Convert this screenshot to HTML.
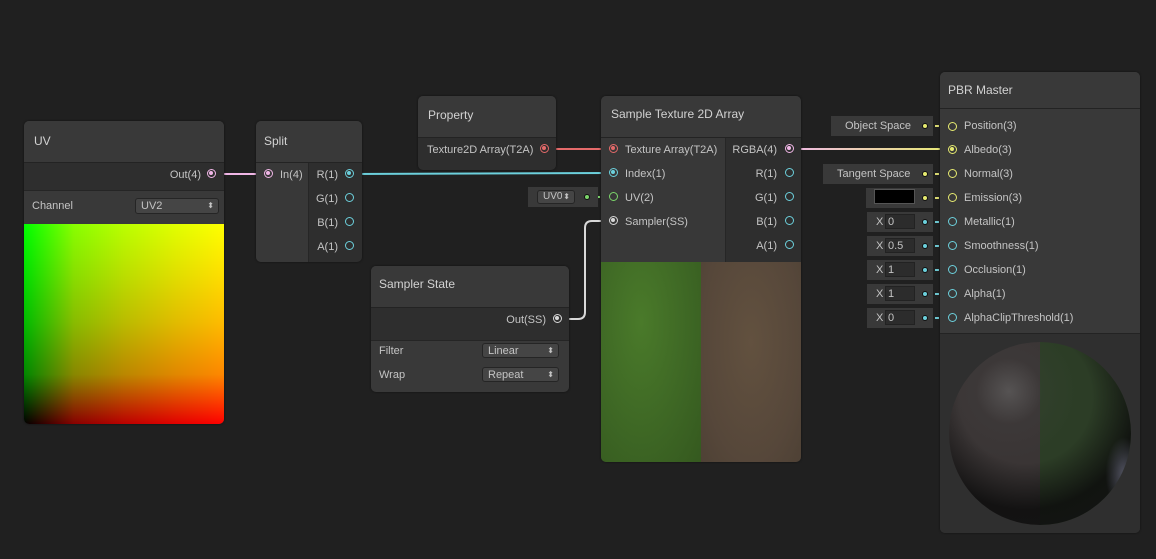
<!DOCTYPE html>
<html><head><meta charset="utf-8"><style>
*{box-sizing:border-box;margin:0;padding:0}
body{width:1156px;height:559px;background:#202020;position:relative;overflow:hidden;font-family:"Liberation Sans","DejaVu Sans",sans-serif;font-size:11px;color:#c4c4c4}
.n{position:absolute;background:#2e2e2e;border-radius:5px;overflow:hidden;box-shadow:0 0 2px #111}
.h{position:absolute;left:0;right:0;top:0;background:#393939;border-bottom:1px solid #232323;font-size:12px;color:#d2d2d2;padding-left:10px}
.a{position:absolute}
.t{position:absolute;white-space:nowrap;font-size:11px;color:#c4c4c4;margin-top:2px}
.p{position:absolute;width:9px;height:9px;border-radius:50%;border:1.5px solid}
.f{position:absolute;width:9px;height:9px;border-radius:50%;border:1.5px solid}
.f::after{content:"";position:absolute;left:1px;top:1px;width:4px;height:4px;border-radius:50%;background:currentColor}
.dd{position:absolute;background:#454545;border:1px solid #252525;border-radius:3px;color:#c4c4c4;font-size:11px;padding-left:5px;line-height:14px}
.dd::after{content:"⬍";position:absolute;right:4px;top:0;font-size:8px}
.lb{position:absolute;background:#393939;height:20px}
.dot{position:absolute;width:6px;height:6px;border-radius:50%;border:1px solid #111}
.in{position:absolute;left:885px;width:30px;height:15px;background:#2c2c2c;border:1px solid #222;padding-left:2px;color:#c4c4c4;line-height:14px;font-size:11px}
</style></head><body>

<svg class="a" style="left:0;top:0" width="1156" height="559">
<defs><linearGradient id="g1" x1="789" x2="952" y1="0" y2="0" gradientUnits="userSpaceOnUse"><stop offset="0" stop-color="#f0b8e8"/><stop offset="1" stop-color="#e6ea70"/></linearGradient></defs>
<line x1="216" y1="174" x2="264" y2="174" stroke="#f0b6e6" stroke-width="2"/>
<line x1="354" y1="174" x2="609" y2="173" stroke="#6cd0dc" stroke-width="2"/>
<line x1="548" y1="149" x2="609" y2="149" stroke="#e56a6a" stroke-width="2"/>
<path d="M561 319 H578 Q585 319 585 312 V228 Q585 221 592 221 H609" fill="none" stroke="#d8d8d8" stroke-width="2"/>
<line x1="793" y1="149" x2="948" y2="149" stroke="url(#g1)" stroke-width="2"/>
<line x1="590" y1="197" x2="609" y2="197" stroke="#7bd56a" stroke-width="2" stroke-dasharray="4 2"/>
<g stroke-width="2" stroke-dasharray="4 2">
<line x1="929" y1="126" x2="948" y2="126" stroke="#d8d870"/>
<line x1="929" y1="174" x2="948" y2="174" stroke="#d8d870"/>
<line x1="929" y1="198" x2="948" y2="198" stroke="#d8d870"/>
<line x1="929" y1="222" x2="948" y2="222" stroke="#6cc6cf"/>
<line x1="929" y1="246" x2="948" y2="246" stroke="#6cc6cf"/>
<line x1="929" y1="270" x2="948" y2="270" stroke="#6cc6cf"/>
<line x1="929" y1="294" x2="948" y2="294" stroke="#6cc6cf"/>
<line x1="929" y1="318" x2="948" y2="318" stroke="#6cc6cf"/>
</g>
</svg>

<!-- UV -->
<div class="n" style="left:24px;top:121px;width:200px;height:303px;background:#393939">
 <div class="h" style="height:42px;line-height:40px">UV</div>
 <div class="a" style="left:0;right:0;top:42px;height:28px;background:#2e2e2e;border-bottom:1px solid #252525"></div>
 <div class="t" style="right:23px;top:46px">Out(4)</div>
 <div class="f" style="left:183px;top:48px;color:#f0b6e6"></div>
 <div class="t" style="left:8px;top:77px">Channel</div>
 <div class="dd" style="left:111px;top:77px;width:84px;height:16px">UV2</div>
 <div class="a" style="left:0;top:103px;width:200px;height:200px;background:linear-gradient(to right,#000,#880000 25%,#ba0000 50%,#df0000 75%,#f00)">
  <div class="a" style="left:0;top:0;width:200px;height:200px;background:linear-gradient(to top,#000,#008800 25%,#00ba00 50%,#00df00 75%,#0f0);mix-blend-mode:screen"></div>
 </div>
</div>

<!-- Split -->
<div class="n" style="left:256px;top:121px;width:106px;height:141px">
 <div class="h" style="height:42px;line-height:40px;padding-left:8px">Split</div>
 <div class="a" style="left:0;top:42px;width:53px;bottom:0;background:#383838;border-right:1px solid #262626"></div>
 <div class="f" style="left:8px;top:48px;color:#f0b6e6"></div>
 <div class="t" style="left:24px;top:46px">In(4)</div>
 <div class="t" style="right:24px;top:46px">R(1)</div>
 <div class="f" style="left:89px;top:48px;color:#6cd0dc"></div>
 <div class="t" style="right:24px;top:70px">G(1)</div><div class="p" style="left:89px;top:72px;color:#6cd0dc"></div>
 <div class="t" style="right:24px;top:94px">B(1)</div><div class="p" style="left:89px;top:96px;color:#6cd0dc"></div>
 <div class="t" style="right:24px;top:118px">A(1)</div><div class="p" style="left:89px;top:120px;color:#6cd0dc"></div>
</div>

<!-- Property -->
<div class="n" style="left:418px;top:96px;width:138px;height:74px">
 <div class="h" style="height:42px;line-height:38px">Property</div>
 <div class="t" style="left:9px;top:46px">Texture2D Array(T2A)</div>
 <div class="f" style="left:122px;top:48px;color:#e56a6a"></div>
</div>

<!-- Sample Texture 2D Array -->
<div class="n" style="left:601px;top:96px;width:200px;height:366px">
 <div class="h" style="height:42px;line-height:36px">Sample Texture 2D Array</div>
 <div class="a" style="left:0;top:42px;width:125px;height:124px;background:#383838;border-right:1px solid #262626"></div>
 <div class="f" style="left:8px;top:48px;color:#e56a6a"></div><div class="t" style="left:24px;top:46px">Texture Array(T2A)</div>
 <div class="f" style="left:8px;top:72px;color:#6cd0dc"></div><div class="t" style="left:24px;top:70px">Index(1)</div>
 <div class="p" style="left:8px;top:96px;color:#7bd56a"></div><div class="t" style="left:24px;top:94px">UV(2)</div>
 <div class="f" style="left:8px;top:120px;color:#d8d8d8"></div><div class="t" style="left:24px;top:118px">Sampler(SS)</div>
 <div class="t" style="right:24px;top:46px">RGBA(4)</div><div class="f" style="left:184px;top:48px;color:#f0b6e6"></div>
 <div class="t" style="right:24px;top:70px">R(1)</div><div class="p" style="left:184px;top:72px;color:#6cd0dc"></div>
 <div class="t" style="right:24px;top:94px">G(1)</div><div class="p" style="left:184px;top:96px;color:#6cd0dc"></div>
 <div class="t" style="right:24px;top:118px">B(1)</div><div class="p" style="left:184px;top:120px;color:#6cd0dc"></div>
 <div class="t" style="right:24px;top:142px">A(1)</div><div class="p" style="left:184px;top:144px;color:#6cd0dc"></div>
 <div class="a" style="left:0;top:166px;width:100px;height:200px;background:radial-gradient(ellipse at 40% 30%,#4a7a2a,#3d6624 60%,#35591f)"></div>
 <div class="a" style="left:100px;top:166px;width:100px;height:200px;background:radial-gradient(ellipse at 50% 40%,#62513f,#56473a 70%,#4e4135)"></div>
</div>
<!-- UV0 field -->
<div class="lb" style="left:528px;top:187px;width:70px"></div>
<div class="dd" style="left:537px;top:190px;width:38px;height:14px;font-size:10px;line-height:12px">UV0</div>
<div class="dot" style="left:584px;top:194px;background:#7bd56a"></div>

<!-- Sampler State -->
<div class="n" style="left:371px;top:266px;width:198px;height:126px;background:#393939">
 <div class="h" style="height:42px;line-height:36px;padding-left:8px">Sampler State</div>
 <div class="a" style="left:0;right:0;top:42px;height:33px;background:#2e2e2e;border-bottom:1px solid #252525"></div>
 <div class="t" style="right:23px;top:46px">Out(SS)</div>
 <div class="f" style="left:182px;top:48px;color:#d8d8d8"></div>
 <div class="t" style="left:8px;top:77px">Filter</div>
 <div class="dd" style="left:111px;top:77px;width:77px;height:15px">Linear</div>
 <div class="t" style="left:8px;top:101px">Wrap</div>
 <div class="dd" style="left:111px;top:101px;width:77px;height:15px">Repeat</div>
</div>

<!-- PBR inputs -->
<div class="lb" style="left:831px;top:116px;width:102px"></div><div class="t" style="left:845px;top:118px">Object Space</div>
<div class="lb" style="left:823px;top:164px;width:110px"></div><div class="t" style="left:837px;top:166px">Tangent Space</div>
<div class="lb" style="left:866px;top:188px;width:67px"></div><div class="a" style="left:874px;top:189px;width:41px;height:15px;background:#000;border:1px solid #555"></div>
<div class="lb" style="left:867px;top:212px;width:66px"></div><div class="t" style="left:876px;top:214px">X</div><div class="in" style="top:214px">0</div>
<div class="lb" style="left:867px;top:236px;width:66px"></div><div class="t" style="left:876px;top:238px">X</div><div class="in" style="top:238px">0.5</div>
<div class="lb" style="left:867px;top:260px;width:66px"></div><div class="t" style="left:876px;top:262px">X</div><div class="in" style="top:262px">1</div>
<div class="lb" style="left:867px;top:284px;width:66px"></div><div class="t" style="left:876px;top:286px">X</div><div class="in" style="top:286px">1</div>
<div class="lb" style="left:867px;top:308px;width:66px"></div><div class="t" style="left:876px;top:310px">X</div><div class="in" style="top:310px">0</div>
<div class="dot" style="left:922px;top:123px;background:#e6ea70"></div>
<div class="dot" style="left:922px;top:171px;background:#e6ea70"></div>
<div class="dot" style="left:922px;top:195px;background:#e6ea70"></div>
<div class="dot" style="left:922px;top:219px;background:#6cd0dc"></div>
<div class="dot" style="left:922px;top:243px;background:#6cd0dc"></div>
<div class="dot" style="left:922px;top:267px;background:#6cd0dc"></div>
<div class="dot" style="left:922px;top:291px;background:#6cd0dc"></div>
<div class="dot" style="left:922px;top:315px;background:#6cd0dc"></div>

<!-- PBR Master -->
<div class="n" style="left:940px;top:72px;width:200px;height:461px;background:#393939">
 <div class="h" style="height:37px;line-height:36px;padding-left:8px">PBR Master</div>
 <div class="p" style="left:8px;top:50px;color:#e6ea70"></div><div class="t" style="left:24px;top:46px">Position(3)</div>
 <div class="f" style="left:8px;top:73px;color:#e6ea70"></div><div class="t" style="left:24px;top:70px">Albedo(3)</div>
 <div class="p" style="left:8px;top:97px;color:#e6ea70"></div><div class="t" style="left:24px;top:94px">Normal(3)</div>
 <div class="p" style="left:8px;top:121px;color:#e6ea70"></div><div class="t" style="left:24px;top:118px">Emission(3)</div>
 <div class="p" style="left:8px;top:145px;color:#6cd0dc"></div><div class="t" style="left:24px;top:142px">Metallic(1)</div>
 <div class="p" style="left:8px;top:169px;color:#6cd0dc"></div><div class="t" style="left:24px;top:166px">Smoothness(1)</div>
 <div class="p" style="left:8px;top:193px;color:#6cd0dc"></div><div class="t" style="left:24px;top:190px">Occlusion(1)</div>
 <div class="p" style="left:8px;top:217px;color:#6cd0dc"></div><div class="t" style="left:24px;top:214px">Alpha(1)</div>
 <div class="p" style="left:8px;top:241px;color:#6cd0dc"></div><div class="t" style="left:24px;top:238px">AlphaClipThreshold(1)</div>
 <div class="a" style="left:0;right:0;top:261px;bottom:0;background:#2f2f2f;border-top:1px solid #232323"></div>
 <div class="a" style="left:9px;top:270px;width:182px;height:183px;border-radius:50%;overflow:hidden;background:linear-gradient(to right,#3a3535 50%,#2c3d26 50%)">
  <div class="a" style="left:0;top:0;width:182px;height:183px;background:radial-gradient(circle at 33% 27%,rgba(120,120,120,.45),rgba(80,80,80,.12) 18%,rgba(0,0,0,0) 38%),radial-gradient(circle at 42% 30%,rgba(0,0,0,0) 40%,rgba(12,12,12,.85) 68%,rgba(18,18,18,.95) 85%)"></div>
  <div class="a" style="left:0;top:0;width:182px;height:183px;background:radial-gradient(ellipse 10% 20% at 96% 72%,rgba(140,140,170,.5),rgba(0,0,0,0))"></div>
 </div>
</div>
</body></html>
